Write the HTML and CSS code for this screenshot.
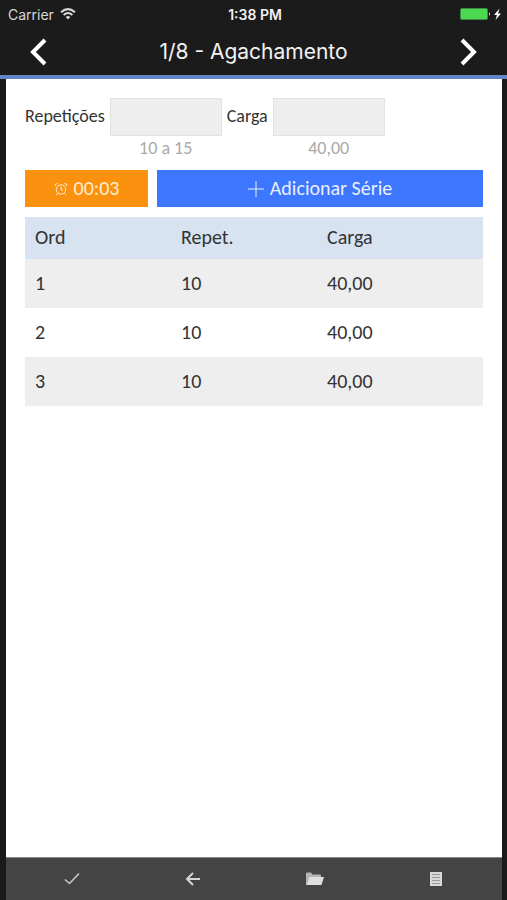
FILE: index.html
```html
<!DOCTYPE html>
<html lang="pt-BR">
<head>
<meta charset="utf-8">
<meta name="viewport" content="width=device-width, initial-scale=1">
<title>Agachamento</title>
<link rel="stylesheet" href="styles.css">
</head>
<body>
<header class="top">
  <div class="status">
    <div class="carrier">Carrier
      <svg width="16" height="12" viewBox="0 0 16 12" fill="none" stroke="currentColor" stroke-width="2"><path d="M1 4.2Q8-2 15 4.2M3.6 7Q8 3 12.4 7"/><path d="M5.7 9Q8 7 10.3 9L8 11.5Z" fill="currentColor" stroke="none"/></svg>
    </div>
    <div class="clock">1:38 PM</div>
    <div class="power">
      <svg width="42" height="14" viewBox="0 0 42 14"><rect x="0.5" y="1.5" width="27" height="11" rx="1.5" fill="#4cd950" stroke="#3d8a45"/><path d="M29 5q2 2 0 4z" fill="#ddd"/><path d="M39.500 1.500L34 8h3l-1.500 5L41 6.500h-3z" fill="#fff"/></svg>
    </div>
  </div>
  <nav class="titlebar">
    <button class="arrow" aria-label="Anterior"><svg width="18" height="28" viewBox="0 0 18 28"><path d="M16 2L4 14l12 12" fill="none" stroke="#fff" stroke-width="4"/></svg></button>
    <h1>1/8 - Agachamento</h1>
    <button class="arrow" aria-label="Próximo"><svg width="18" height="28" viewBox="0 0 18 28"><path d="M2 2L14 14 2 26" fill="none" stroke="#fff" stroke-width="4"/></svg></button>
  </nav>
</header>
<main class="panel">
  <form class="entry">
    <label for="reps">Repetições</label>
    <input id="reps" type="text">
    <label for="load">Carga</label>
    <input id="load" type="text">
    <span class="hint hint-reps">10 a 15</span>
    <span class="hint hint-load">40,00</span>
  </form>
  <div class="actions">
    <button class="timer">
      <svg width="14" height="14" viewBox="0 0 14 14" fill="none" stroke="currentColor"><circle cx="7" cy="7.500" r="4.700"/><path d="M7 4.500v3.500h2M1 4Q1 1.500 3.800 1.500M13 4Q13 1.500 10.200 1.500M3.500 11.500L2 13M10.500 11.500L12 13"/></svg>
      <span>00:03</span>
    </button>
    <button class="add">
      <svg width="16" height="16" viewBox="0 0 16 16" stroke="currentColor"><path d="M8 0v16M0 8h16"/></svg>
      <span>Adicionar Série</span>
    </button>
  </div>
  <table class="sets">
    <thead><tr><th>Ord</th><th>Repet.</th><th>Carga</th></tr></thead>
    <tbody>
      <tr><td>1</td><td>10</td><td>40,00</td></tr>
      <tr><td>2</td><td>10</td><td>40,00</td></tr>
      <tr><td>3</td><td>10</td><td>40,00</td></tr>
    </tbody>
  </table>
</main>
<footer class="tabs">
  <button aria-label="Concluir"><svg width="16" height="14" viewBox="0 0 16 14"><path d="M1 7.500l4.500 4L15 1.500" fill="none" stroke="#c8c8c8" stroke-width="1.600"/></svg></button>
  <button aria-label="Voltar"><svg width="16" height="14" viewBox="0 0 16 14"><path d="M8 1L2 7l6 6M2 7h13" fill="none" stroke="#d6d6d6" stroke-width="2"/></svg></button>
  <button aria-label="Abrir"><svg width="20" height="14" viewBox="0 0 20 14"><path d="M1 13V1.500Q1 .5 2 .5h4l1.500 2H15q1 0 1 1V5H5L2 13z" fill="#b4b4b4"/><path d="M4.500 5H19l-2.500 8H1.500z" fill="#dedede"/></svg></button>
  <button aria-label="Lista"><svg width="12" height="14" viewBox="0 0 12 14"><path d="M0 0h12v14H0z" fill="#d8d8d8"/><path d="M2 2.500h8M2 5.500h8M2 8.500h8M2 11.500h8" stroke="#999"/></svg></button>
</footer>
</body>
</html>
```
FILE: styles.css
```css
* {
  box-sizing: border-box;
}

body {
  margin: 0;
  min-height: 100vh;
  display: flex;
  flex-direction: column;
  background: #1a1a1a;
  color: #333;
  font-family: Carlito, "Open Sans", sans-serif;
  font-size: 18px;
}

button {
  border: 0;
  padding: 0;
  background: none;
  color: inherit;
  font: inherit;
  display: flex;
  align-items: center;
  justify-content: center;
}

.top {
  background: #1b1b1b;
  border-bottom: 4px solid #6186c8;
  color: #f2f2f2;
  font-family: Inter, sans-serif;
}

.status {
  display: grid;
  grid-template-columns: 1fr auto 1fr;
  align-items: center;
  height: 28px;
  padding: 0 5px 0 8px;
  font-size: 14px;
}

.carrier {
  display: flex;
  align-items: center;
  gap: 6px;
  color: #d8d8d8;
}

.clock {
  font-weight: 600;
}

.power {
  display: flex;
  justify-content: flex-end;
}

.titlebar {
  display: flex;
  align-items: center;
  justify-content: space-between;
  height: 47px;
  padding: 0 29px;
}

.titlebar h1 {
  margin: 0;
  font-size: 21px;
  font-weight: 400;
}

.panel {
  flex: 1;
  margin: 0 5px 0 6px;
  padding: 19px 19px 0;
  background: #fff;
}

.entry {
  display: grid;
  grid-template-columns: auto 112px auto 112px;
  justify-content: start;
  align-items: center;
  column-gap: 5px;
}

.entry label {
  padding-bottom: 2px;
}

.entry input {
  width: 100%;
  height: 38px;
  border: 1px solid #e2e2e2;
  background: #eee;
  font: inherit;
}

.hint {
  color: #aaa;
  line-height: 24px;
  text-align: center;
}

.hint-reps {
  grid-column: 2;
}

.hint-load {
  grid-column: 4;
}

.actions {
  display: flex;
  gap: 9px;
  margin: 10px 0;
}

.actions button {
  height: 37px;
  gap: 6px;
  font-size: 20px;
}

.actions span {
  padding-bottom: 2px;
}

.timer {
  flex: 0 0 123px;
  background: #fa920f;
  color: #ffedcf;
}

.add {
  flex: 1;
  background: #3d76ff;
  color: #e9f0ff;
}

.sets {
  width: 100%;
  table-layout: fixed;
  border-collapse: collapse;
  font-size: 20px;
}

.sets th,
.sets td {
  height: 49px;
  padding: 0 10px 2px;
  text-align: left;
  font-weight: 400;
}

.sets th:not(:last-child) {
  width: 146px;
}

.sets th {
  height: 42px;
  background: #d7e3f0;
}

.sets tbody tr:nth-child(odd) {
  background: #eee;
}

.tabs {
  display: flex;
  height: 43px;
  margin: 0 5px 0 6px;
  padding: 0 5px;
  background: #444;
  border-top: 1px solid #888;
}

.tabs button {
  flex: 1;
}
```
